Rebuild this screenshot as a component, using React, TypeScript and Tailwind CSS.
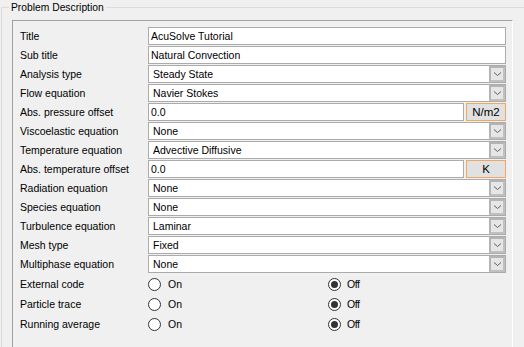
import React from "react";

type Row =
  | { kind: "text"; label: string; value: string }
  | { kind: "combo"; label: string; value: string }
  | { kind: "unit"; label: string; value: string; unit: string };

const rows: Row[] = [
  { kind: "text", label: "Title", value: "AcuSolve Tutorial" },
  { kind: "text", label: "Sub title", value: "Natural Convection" },
  { kind: "combo", label: "Analysis type", value: "Steady State" },
  { kind: "combo", label: "Flow equation", value: "Navier Stokes" },
  { kind: "unit", label: "Abs. pressure offset", value: "0.0", unit: "N/m2" },
  { kind: "combo", label: "Viscoelastic equation", value: "None" },
  { kind: "combo", label: "Temperature equation", value: "Advective Diffusive" },
  { kind: "unit", label: "Abs. temperature offset", value: "0.0", unit: "K" },
  { kind: "combo", label: "Radiation equation", value: "None" },
  { kind: "combo", label: "Species equation", value: "None" },
  { kind: "combo", label: "Turbulence equation", value: "Laminar" },
  { kind: "combo", label: "Mesh type", value: "Fixed" },
  { kind: "combo", label: "Multiphase equation", value: "None" },
];

const radios = ["External code", "Particle trace", "Running average"];

function Chevron() {
  return (
    <svg width="9" height="6" viewBox="0 0 9 6">
      <path d="M1 1.5 L4.5 4.5 L8 1.5" fill="none" stroke="#606060" strokeWidth="1" />
    </svg>
  );
}

function Radio({ checked }: { checked: boolean }) {
  return (
    <div className="w-[13px] h-[13px] rounded-full border border-[#333333] bg-white flex items-center justify-center">
      {checked && <div className="w-[7px] h-[7px] rounded-full bg-[#333333]" />}
    </div>
  );
}

export default function App() {
  return (
    <div
      className="w-[524px] h-[347px] bg-[#f0f0f0] overflow-hidden text-black text-[10.5px] leading-none pt-[7px]"
      style={{ fontFamily: '"Liberation Sans", Arial, sans-serif' }}
    >
      <div className="relative ml-[1px] border-t border-l border-[#dcdcdc] h-[400px]">
        <div className="absolute left-[7px] top-[-6px] bg-[#f0f0f0] px-[2px] text-[10.3px] leading-[11px]">
          Problem Description
        </div>
        <div className="mt-[12px] ml-[10px] w-[501px] h-[400px] border-l border-t border-[#a0a0a0] border-r border-r-white pt-[6px] pl-[7px] pr-[6px]">
          {rows.map((r) => (
            <div key={r.label} className="flex h-[18px] mb-[1px] items-stretch">
              <div className="w-[128px] flex items-center pt-[1px]">{r.label}</div>
              {r.kind === "text" && (
                <div className="flex-1 bg-white border border-[#ababab] flex items-center pl-[2px] pt-[1px]">
                  {r.value}
                </div>
              )}
              {r.kind === "combo" && (
                <div className="flex-1 bg-white border border-[#ababab] flex items-stretch">
                  <div className="flex-1 flex items-center pl-[4px] pt-[1px]">{r.value}</div>
                  <div className="w-[16px] bg-[#e6e6e6] border-2 border-[#b4b4b4] border-r-[#c0c0c0] border-b-[#c0c0c0] flex items-center justify-center">
                    <Chevron />
                  </div>
                </div>
              )}
              {r.kind === "unit" && (
                <div className="flex-1 flex items-stretch gap-[2px]">
                  <div className="flex-1 bg-white border border-[#ababab] flex items-center pl-[2px] pt-[1px]">
                    {r.value}
                  </div>
                  <div className="w-[40px] bg-[#e1e1e1] border border-[#f0a860] flex items-center justify-center text-[11.5px] pt-[1px]">
                    {r.unit}
                  </div>
                </div>
              )}
            </div>
          ))}
          <div className="mt-[1px]">
            {radios.map((l) => (
              <div key={l} className="flex h-[20px] items-center">
                <div className="w-[128px] pt-[1px]">{l}</div>
                <div className="w-[180px] flex items-center gap-[7px]">
                  <Radio checked={false} />
                  <span className="pt-[1px]">On</span>
                </div>
                <div className="flex items-center gap-[6px]">
                  <Radio checked={true} />
                  <span className="pt-[1px] tracking-[-0.4px]">Off</span>
                </div>
              </div>
            ))}
          </div>
        </div>
      </div>
    </div>
  );
}
